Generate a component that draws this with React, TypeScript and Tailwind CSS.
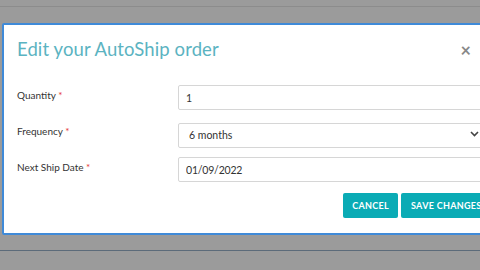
import React, { useState } from "react";

const font = { fontFamily: "Lato, 'Open Sans', Arial, sans-serif" };

function Field({ label, children }: { label: string; children: React.ReactNode }) {
  return (
    <div className="grid grid-cols-[161px_1fr] h-[25px]">
      <label className="pt-[3px] text-[10px] text-[#333]">
        {label} <span className="text-[#e53935]">*</span>
      </label>
      {children}
    </div>
  );
}

export default function App() {
  const [qty, setQty] = useState("1");
  const [freq, setFreq] = useState("6");
  const [date, setDate] = useState("01/09/2022");

  return (
    <div className="relative w-[480px] h-[270px] overflow-hidden bg-[#9b9b9b]" style={font}>
      {/* page behind the overlay */}
      <div className="h-[7px] border-b border-[#8c8c8c]" />
      <div className="h-[244px] border-b border-[#5c6b7a]" />

      {/* modal */}
      <div className="absolute left-[2px] top-[23px] w-[520px] h-[212px] bg-white border-2 border-[#3f8ad8] rounded-[2px]">
        <div className="flex items-start justify-between pl-[13px] pr-[49px] pt-[13px]">
          <h2 className="text-[18.5px] leading-[23px] tracking-[0.1px] text-[#5bb3c1]">Edit your AutoShip order</h2>
          <button className="mt-[3px] text-[18px] leading-none font-bold text-[#888]">×</button>
        </div>

        <div className="flex flex-col gap-[11px] pl-[13px] pr-[38px] mt-[24px]">
          <Field label="Quantity">
            <input
              value={qty}
              onChange={(e) => setQty(e.target.value)}
              className="h-[25px] border border-[#d6d6d6] rounded-[2px] px-[7px] text-[10.5px] text-[#333] outline-none"
            />
          </Field>
          <Field label="Frequency">
            <div className="relative">
              <select
                value={freq}
                onChange={(e) => setFreq(e.target.value)}
                className="appearance-none w-full h-[25px] border border-[#d6d6d6] rounded-[2px] pl-[10px] text-[10.5px] text-[#333] bg-white outline-none"
              >
                <option value="1">1 month</option>
                <option value="3">3 months</option>
                <option value="6">6 months</option>
              </select>
              <svg className="absolute right-[3px] top-[10px] pointer-events-none" width="9" height="6" viewBox="0 0 9 6">
                <path d="M1 1l3.5 3.5L8 1" fill="none" stroke="#444" strokeWidth="1.6" />
              </svg>
            </div>
          </Field>
          <Field label="Next Ship Date">
            <input
              value={date}
              onChange={(e) => setDate(e.target.value)}
              className="h-[25px] border border-[#d6d6d6] rounded-[2px] px-[7px] text-[10.5px] text-[#333] tracking-[-0.2px] outline-none"
            />
          </Field>
        </div>

        <div className="flex gap-[3px] pl-[339px] mt-[11px]">
          <button className="h-[25px] w-[55px] rounded-[2px] bg-[#0aabb5] text-white text-[9px] font-bold tracking-[0.3px]">
            CANCEL
          </button>
          <button className="h-[25px] px-[10px] rounded-[2px] bg-[#0aabb5] text-white text-[9px] font-bold tracking-[0.3px] whitespace-nowrap">
            SAVE CHANGES
          </button>
        </div>
      </div>
    </div>
  );
}
